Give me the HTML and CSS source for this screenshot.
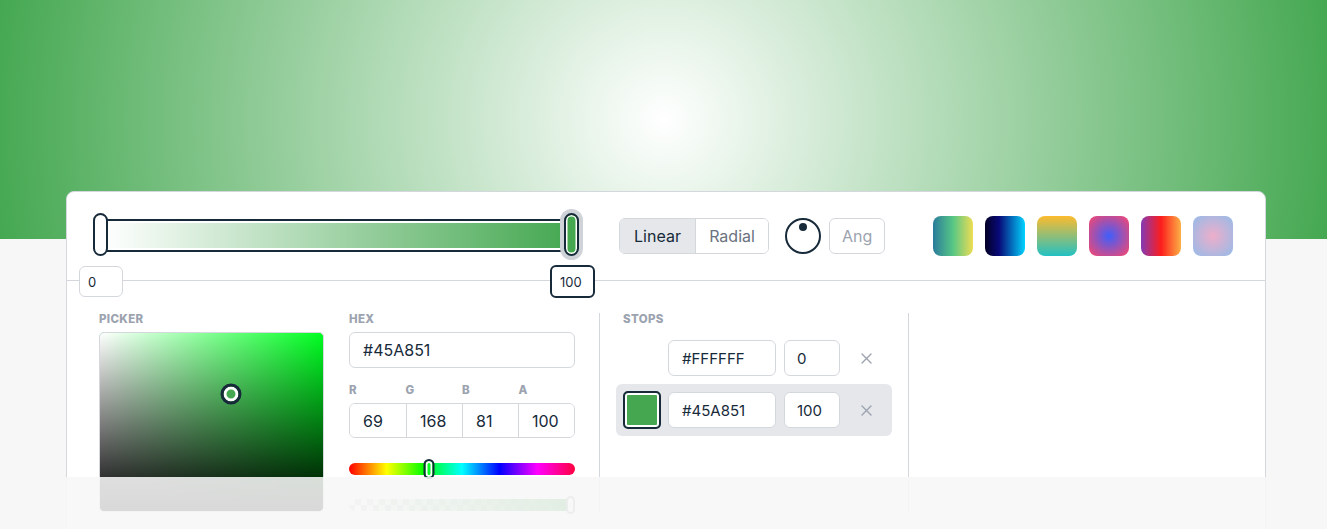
FILE: index.html
```html
<!DOCTYPE html>
<html lang="en">
<head>
<meta charset="utf-8">
<title>Gradient Editor</title>
<link rel="stylesheet" href="styles.css">
</head>
<body>
<div class="hero"></div>
<main class="card">
  <div class="toolbar">
    <div class="stop-slider">
      <span class="thumb thumb-start"></span>
      <span class="thumb thumb-end"></span>
      <input class="stop-pos pos-start" value="0">
      <input class="stop-pos pos-end" value="100">
    </div>
    <div class="segmented">
      <button class="seg seg-active">Linear</button>
      <button class="seg">Radial</button>
    </div>
    <div class="knob"><span class="knob-dot"></span></div>
    <input class="angle" placeholder="Ang">
    <div class="presets">
      <span class="preset p1"></span>
      <span class="preset p2"></span>
      <span class="preset p3"></span>
      <span class="preset p4"></span>
      <span class="preset p5"></span>
      <span class="preset p6"></span>
    </div>
  </div>
  <div class="editor">
    <section class="col picker-col">
      <div class="label">Picker</div>
      <div class="sv-box">
        <span class="sv-cursor"></span>
      </div>
    </section>
    <section class="col values-col">
      <div class="label">Hex</div>
      <input class="field hex-field" value="#45A851">
      <div class="rgba-labels">
        <span class="label">R</span>
        <span class="label">G</span>
        <span class="label">B</span>
        <span class="label">A</span>
      </div>
      <div class="rgba">
        <input class="rgba-cell" value="69">
        <input class="rgba-cell" value="168">
        <input class="rgba-cell" value="81">
        <input class="rgba-cell" value="100">
      </div>
      <div class="hue-bar"><span class="hue-thumb"></span></div>
      <div class="alpha-bar"><span class="alpha-thumb"></span></div>
    </section>
    <section class="col stops-col">
      <div class="label stops-label">Stops</div>
      <div class="stop-row">
        <span class="swatch swatch-white"></span>
        <input class="field stop-hex" value="#FFFFFF">
        <input class="field stop-num" value="0">
        <button class="remove" aria-label="Remove stop"><svg width="11" height="11" viewBox="0 0 11 11"><path d="M1 1 L10 10 M10 1 L1 10" stroke="#9ca3af" stroke-width="1.4" stroke-linecap="round"/></svg></button>
      </div>
      <div class="stop-row stop-row-active">
        <span class="swatch swatch-green"></span>
        <input class="field stop-hex" value="#45A851">
        <input class="field stop-num" value="100">
        <button class="remove" aria-label="Remove stop"><svg width="11" height="11" viewBox="0 0 11 11"><path d="M1 1 L10 10 M10 1 L1 10" stroke="#9ca3af" stroke-width="1.4" stroke-linecap="round"/></svg></button>
      </div>
    </section>
  </div>
</main>
<div class="fade"></div>
</body>
</html>
```

FILE: styles.css
```css
* { box-sizing: border-box; }

html, body {
  margin: 0;
  padding: 0;
}

body {
  background: #f7f7f7;
  font-family: Inter, "Liberation Sans", sans-serif;
  color: #172a3a;
  overflow: hidden;
  height: 529px;
}

.hero {
  height: 239px;
  background: radial-gradient(circle at 50% 50%, #ffffff 0%, #45a851 100%);
}

.card {
  width: 1200px;
  margin: -48px 0 0 66px;
  background: #fff;
  border: 1px solid #d4d8dd;
  border-radius: 8px 8px 0 0;
  position: relative;
}

/* ---------- toolbar ---------- */
.toolbar {
  height: 89px;
  display: flex;
  align-items: center;
  padding-left: 33px;
  border-bottom: 1px solid #d4d8dd;
}

.stop-slider {
  position: relative;
  width: 472px;
  height: 33px;
  border: 2.5px solid #172a3a;
  padding: 2px;
  background: linear-gradient(to right, #ffffff, #45a851) content-box, #fff;
  flex: none;
  margin-top: -1px;
}

.thumb {
  position: absolute;
  top: -8px;
  width: 15px;
  height: 43px;
  border: 2.5px solid #172a3a;
  border-radius: 8px;
  background: #fff;
}

.thumb-start { left: -9px; }

.thumb-end {
  left: 462px;
  background: #45a851;
  box-shadow: inset 0 0 0 1.5px #fff, 0 0 0 4px #cfd3d8;
}

.stop-pos {
  position: absolute;
  font-family: inherit;
  font-size: 13px;
  color: #172a3a;
  background: #fff;
  border-radius: 6px;
  padding: 0 0 0 8px;
  outline: none;
}

.pos-start {
  left: -23px;
  top: 45px;
  width: 44px;
  height: 31px;
  border: 1px solid #d4d8dd;
}

.pos-end {
  left: 448px;
  top: 44px;
  width: 45px;
  height: 33px;
  border: 2px solid #172a3a;
}

.segmented {
  margin-left: 47px;
  display: flex;
  height: 36px;
  border: 1px solid #d4d8dd;
  border-radius: 6px;
  overflow: hidden;
}

.seg {
  font-family: inherit;
  font-size: 16px;
  border: 0;
  background: #fff;
  color: #6b7280;
  padding: 0;
  width: 72px;
}

.seg-active {
  background: #e5e7eb;
  color: #172a3a;
  border-right: 1px solid #d4d8dd;
  width: 76px;
}

.knob {
  margin-left: 16px;
  width: 36px;
  height: 36px;
  border: 2px solid #172a3a;
  border-radius: 50%;
  position: relative;
}

.knob-dot {
  position: absolute;
  left: 12px;
  top: 3px;
  width: 8px;
  height: 8px;
  border-radius: 50%;
  background: #172a3a;
}

.angle {
  margin-left: 8px;
  width: 56px;
  height: 36px;
  border: 1px solid #d4d8dd;
  border-radius: 6px;
  font-family: inherit;
  font-size: 16px;
  padding: 0 0 0 12px;
  outline: none;
}

.angle::placeholder { color: #9ca3af; }

.presets {
  margin-left: 48px;
  display: flex;
  gap: 12px;
}

.preset {
  width: 40px;
  height: 40px;
  border-radius: 8px;
}

.p1 { background: linear-gradient(90deg, #2a7b9b 0%, #57c785 50%, #eddd53 100%); }
.p2 { background: linear-gradient(90deg, #020024 0%, #090979 35%, #00d4ff 100%); }
.p3 { background: linear-gradient(0deg, #22c1c3 0%, #fdbb2d 100%); }
.p4 { background: radial-gradient(circle, #3f5efb 0%, #fc466b 100%); }
.p5 { background: linear-gradient(90deg, #833ab4 0%, #fd1d1d 50%, #fcb045 100%); }
.p6 { background: radial-gradient(circle, #eeaeca 0%, #94bbe9 100%); }

/* ---------- editor ---------- */
.editor {
  display: flex;
  padding: 32px 0 40px 32px;
}

.label {
  font-size: 11.5px;
  line-height: 12px;
  font-weight: 800;
  letter-spacing: 0.03em;
  text-transform: uppercase;
  color: #9ca3af;
  margin-bottom: 7px;
}

.picker-col {
  width: 225px;
  margin-right: 25px;
}

.sv-box {
  position: relative;
  width: 225px;
  height: 180px;
  border-radius: 5px;
  border: 1px solid #d4d8dd;
  background:
    linear-gradient(to top, #000 0%, rgba(0,0,0,0) 100%),
    linear-gradient(to right, #fff 0%, rgba(255,255,255,0) 100%),
    #00ff22;
}

.sv-cursor {
  position: absolute;
  left: 58.9%;
  top: 34.1%;
  width: 21px;
  height: 21px;
  transform: translate(-50%, -50%);
  border-radius: 50%;
  border: 3px solid #172a3a;
  background: #45a851;
  box-shadow: inset 0 0 0 3px #fff;
}

.values-col {
  width: 250px;
  padding-right: 24px;
}

.field {
  font-family: inherit;
  color: #172a3a;
  border: 1px solid #d4d8dd;
  border-radius: 6px;
  background: #fff;
  outline: none;
}

.hex-field {
  display: block;
  width: 226px;
  height: 36px;
  font-size: 16px;
  padding: 0 0 0 13px;
}

.rgba-labels {
  display: grid;
  grid-template-columns: repeat(4, 1fr);
  width: 226px;
  margin-top: 16px;
}

.rgba {
  display: grid;
  grid-template-columns: repeat(4, 1fr);
  width: 226px;
  height: 35px;
  border: 1px solid #d4d8dd;
  border-radius: 6px;
  overflow: hidden;
}

.rgba-cell {
  min-width: 0;
  border: 0;
  border-left: 1px solid #d4d8dd;
  font-family: inherit;
  font-size: 16px;
  color: #172a3a;
  padding: 0 0 0 13px;
  outline: none;
}

.rgba-cell:first-child { border-left: 0; }

.hue-bar {
  position: relative;
  width: 226px;
  height: 12px;
  margin-top: 25px;
  border-radius: 6px;
  background: linear-gradient(to right, #ff0000 0%, #ffff00 16.6%, #00ff00 33.3%, #00ffff 50%, #0000ff 66.6%, #ff00ff 83.3%, #ff0040 100%);
}

.hue-thumb {
  position: absolute;
  left: 35.5%;
  top: -4px;
  width: 11px;
  height: 20px;
  transform: translateX(-50%);
  border: 2px solid #172a3a;
  border-radius: 6px;
  background: #00ff22;
  box-shadow: inset 0 0 0 2px #fff;
}

.alpha-bar {
  position: relative;
  width: 226px;
  height: 12px;
  margin-top: 24px;
  border-radius: 6px;
  background:
    linear-gradient(to right, rgba(69,168,81,0) 0%, #45a851 100%),
    repeating-conic-gradient(#d7d7d7 0% 25%, #ffffff 0% 50%) 0 0 / 12px 12px;
}

.alpha-thumb {
  position: absolute;
  right: 0;
  top: -3px;
  width: 9px;
  height: 18px;
  border: 2px solid #9aa0a6;
  border-radius: 5px;
  background: #fff;
}

.stops-col {
  width: 310px;
  padding: 0 16px;
  border-left: 1px solid #d4d8dd;
  border-right: 1px solid #d4d8dd;
}

.stops-label { margin-left: 7px; }

.stop-row {
  display: flex;
  align-items: center;
  height: 52px;
  padding-left: 7px;
  border-radius: 6px;
}

.stop-row-active { background: #e5e7eb; }

.swatch {
  width: 38px;
  height: 38px;
  border-radius: 5px;
  flex: none;
}

.swatch-white { background: #fff; }

.swatch-green {
  border: 2px solid #172a3a;
  background: #45a851;
  box-shadow: inset 0 0 0 2px #fff;
}

.stop-hex {
  margin-left: 7px;
  width: 108px;
  height: 36px;
  font-size: 15px;
  padding: 0 0 0 13px;
}

.stop-num {
  margin-left: 8px;
  width: 56px;
  height: 36px;
  font-size: 15px;
  padding: 0 0 0 12px;
}

.remove {
  flex: 1;
  height: 36px;
  border: 0;
  background: transparent;
  display: flex;
  align-items: center;
  justify-content: center;
  padding: 0;
}

.fade {
  position: fixed;
  left: 0;
  right: 0;
  top: 477px;
  bottom: 0;
  background: rgba(247, 247, 247, 0.88);
}
```
